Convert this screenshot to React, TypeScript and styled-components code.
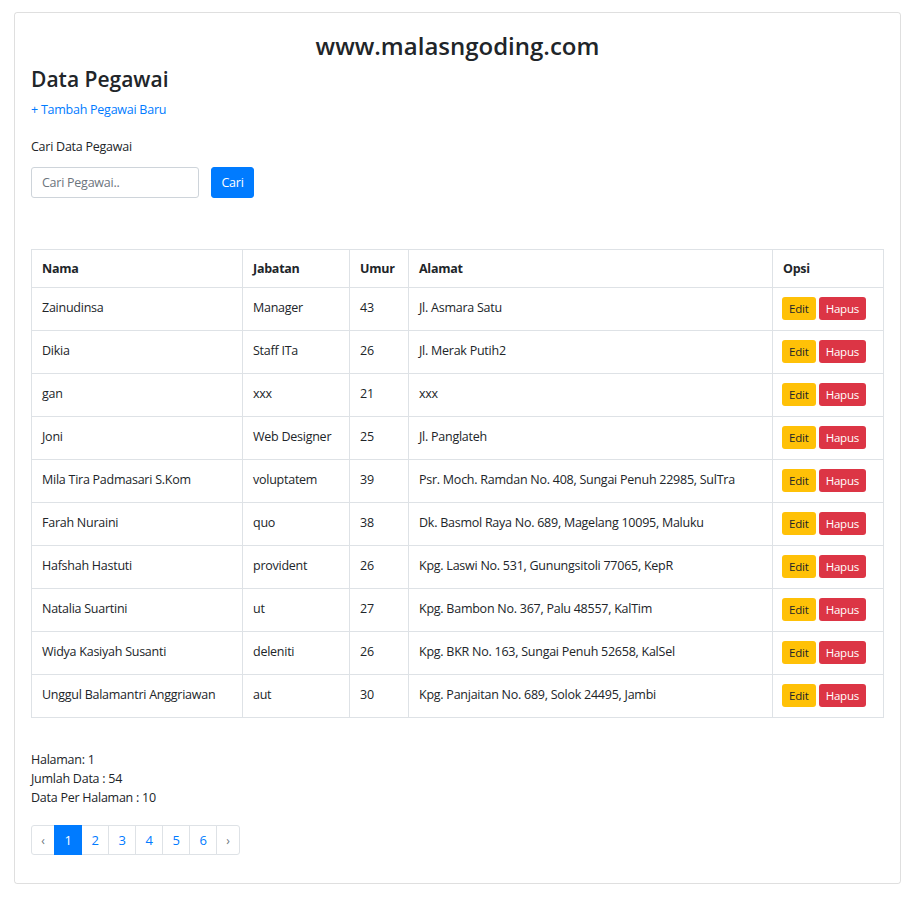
import React from "react";
import styled, { createGlobalStyle } from "styled-components";

const Global = createGlobalStyle`
  html, body { margin: 0; padding: 0; background: #fff; }
  body {
    font-family: "Open Sans", "Noto Sans", sans-serif;
    font-size: 12.5px;
    letter-spacing: -0.25px;
    line-height: 21px;
    color: #212529;
  }
  * { box-sizing: border-box; }
`;

const Page = styled.div`
  padding: 12px 15px 20px 14px;
`;

const Card = styled.div`
  border: 1px solid rgba(0, 0, 0, 0.125);
  border-radius: 3px;
  padding: 18px 16px 27px 16px;
  min-height: 872px;
`;

const SiteTitle = styled.h3`
  margin: 0 0 7px 0;
  font-size: 24px;
  line-height: 29px;
  font-weight: 600;
  letter-spacing: 0;
  text-align: center;
`;

const Heading = styled.h4`
  margin: 0 0 7px 0;
  font-size: 21px;
  line-height: 25px;
  font-weight: 600;
  letter-spacing: 0;
`;

const AddLink = styled.a`
  display: block;
  color: #007bff;
  text-decoration: none;
`;

const SearchLabel = styled.div`
  margin-top: 16px;
`;

const SearchRow = styled.form`
  display: flex;
  gap: 12px;
  margin-top: 10px;
  margin-bottom: 51px;
`;

const SearchInput = styled.input`
  width: 168px;
  height: 31px;
  border: 1px solid #ced4da;
  border-radius: 3px;
  padding: 0 10px;
  font-family: inherit;
  font-size: 12.5px;
  letter-spacing: -0.25px;
  color: #495057;
  &::placeholder { color: #6c757d; }
`;

const PrimaryButton = styled.button`
  height: 31px;
  width: 43px;
  background: #007bff;
  border: 1px solid #007bff;
  border-radius: 3px;
  color: #fff;
  font-family: inherit;
  font-size: 12.5px;
  letter-spacing: -0.25px;
  padding: 0;
`;

const Table = styled.table`
  width: 853px;
  border-collapse: collapse;
`;

const Th = styled.th<{ $w?: number }>`
  text-align: left;
  font-weight: 700;
  border: 1px solid #dee2e6;
  height: 38px;
  padding: 0 10px;
  width: ${(p) => (p.$w ? `${p.$w}px` : "auto")};
`;

const Td = styled.td`
  border: 1px solid #dee2e6;
  height: 43px;
  padding: 9px 10px 12px 10px;
  vertical-align: top;
  white-space: nowrap;
`;

const OptTd = styled(Td)`
  padding: 9px 9px 8px 9px;
`;

const Opts = styled.div`
  display: flex;
  gap: 3px;
`;

const SmallBtn = styled.button<{ $kind: "warn" | "danger" }>`
  height: 23px;
  padding: 0 7px;
  border-radius: 3px;
  border: none;
  font-family: inherit;
  font-size: 11.5px;
  letter-spacing: -0.2px;
  line-height: 23px;
  background: ${(p) => (p.$kind === "warn" ? "#ffc107" : "#dc3545")};
  color: ${(p) => (p.$kind === "warn" ? "#212529" : "#fff")};
`;

const Info = styled.div`
  margin-top: 32px;
  line-height: 19px;
`;

const Pager = styled.ul`
  display: flex;
  list-style: none;
  padding: 0;
  margin: 18px 0 0 0;
`;

const PageItem = styled.li<{ $active?: boolean; $w: number; $first?: boolean; $last?: boolean }>`
  width: ${(p) => p.$w}px;
  height: 30px;
  display: flex;
  align-items: center;
  justify-content: center;
  border: 1px solid ${(p) => (p.$active ? "#007bff" : "#dee2e6")};
  margin-left: ${(p) => (p.$first ? 0 : -1)}px;
  background: ${(p) => (p.$active ? "#007bff" : "#fff")};
  color: ${(p) => (p.$active ? "#fff" : "#007bff")};
  font-size: 13px;
  position: relative;
  z-index: ${(p) => (p.$active ? 1 : 0)};
  border-radius: ${(p) => (p.$first ? "3px 0 0 3px" : p.$last ? "0 3px 3px 0" : "0")};
`;

const Arrow = styled.span`
  color: #6c757d;
  font-size: 12px;
`;

const rows = [
  ["Zainudinsa", "Manager", "43", "Jl. Asmara Satu"],
  ["Dikia", "Staff ITa", "26", "Jl. Merak Putih2"],
  ["gan", "xxx", "21", "xxx"],
  ["Joni", "Web Designer", "25", "Jl. Panglateh"],
  ["Mila Tira Padmasari S.Kom", "voluptatem", "39", "Psr. Moch. Ramdan No. 408, Sungai Penuh 22985, SulTra"],
  ["Farah Nuraini", "quo", "38", "Dk. Basmol Raya No. 689, Magelang 10095, Maluku"],
  ["Hafshah Hastuti", "provident", "26", "Kpg. Laswi No. 531, Gunungsitoli 77065, KepR"],
  ["Natalia Suartini", "ut", "27", "Kpg. Bambon No. 367, Palu 48557, KalTim"],
  ["Widya Kasiyah Susanti", "deleniti", "26", "Kpg. BKR No. 163, Sungai Penuh 52658, KalSel"],
  ["Unggul Balamantri Anggriawan", "aut", "30", "Kpg. Panjaitan No. 689, Solok 24495, Jambi"],
];

export default function App() {
  return (
    <>
      <Global />
      <Page>
        <Card>
          <SiteTitle>www.malasngoding.com</SiteTitle>
          <Heading>Data Pegawai</Heading>
          <AddLink href="#">+ Tambah Pegawai Baru</AddLink>
          <SearchLabel>Cari Data Pegawai</SearchLabel>
          <SearchRow onSubmit={(e) => e.preventDefault()}>
            <SearchInput placeholder="Cari Pegawai.." />
            <PrimaryButton type="submit">Cari</PrimaryButton>
          </SearchRow>
          <Table>
            <thead>
              <tr>
                <Th $w={211}>Nama</Th>
                <Th $w={107}>Jabatan</Th>
                <Th $w={59}>Umur</Th>
                <Th $w={364}>Alamat</Th>
                <Th>Opsi</Th>
              </tr>
            </thead>
            <tbody>
              {rows.map((r, i) => (
                <tr key={i}>
                  <Td>{r[0]}</Td>
                  <Td>{r[1]}</Td>
                  <Td>{r[2]}</Td>
                  <Td>{r[3]}</Td>
                  <OptTd>
                    <Opts>
                      <SmallBtn $kind="warn">Edit</SmallBtn>
                      <SmallBtn $kind="danger">Hapus</SmallBtn>
                    </Opts>
                  </OptTd>
                </tr>
              ))}
            </tbody>
          </Table>
          <Info>
            <div>Halaman: 1</div>
            <div>Jumlah Data : 54</div>
            <div>Data Per Halaman : 10</div>
          </Info>
          <Pager>
            <PageItem $w={24} $first><Arrow>‹</Arrow></PageItem>
            {[1, 2, 3, 4, 5, 6].map((n) => (
              <PageItem key={n} $w={28} $active={n === 1}>{n}</PageItem>
            ))}
            <PageItem $w={24} $last><Arrow>›</Arrow></PageItem>
          </Pager>
        </Card>
      </Page>
    </>
  );
}
